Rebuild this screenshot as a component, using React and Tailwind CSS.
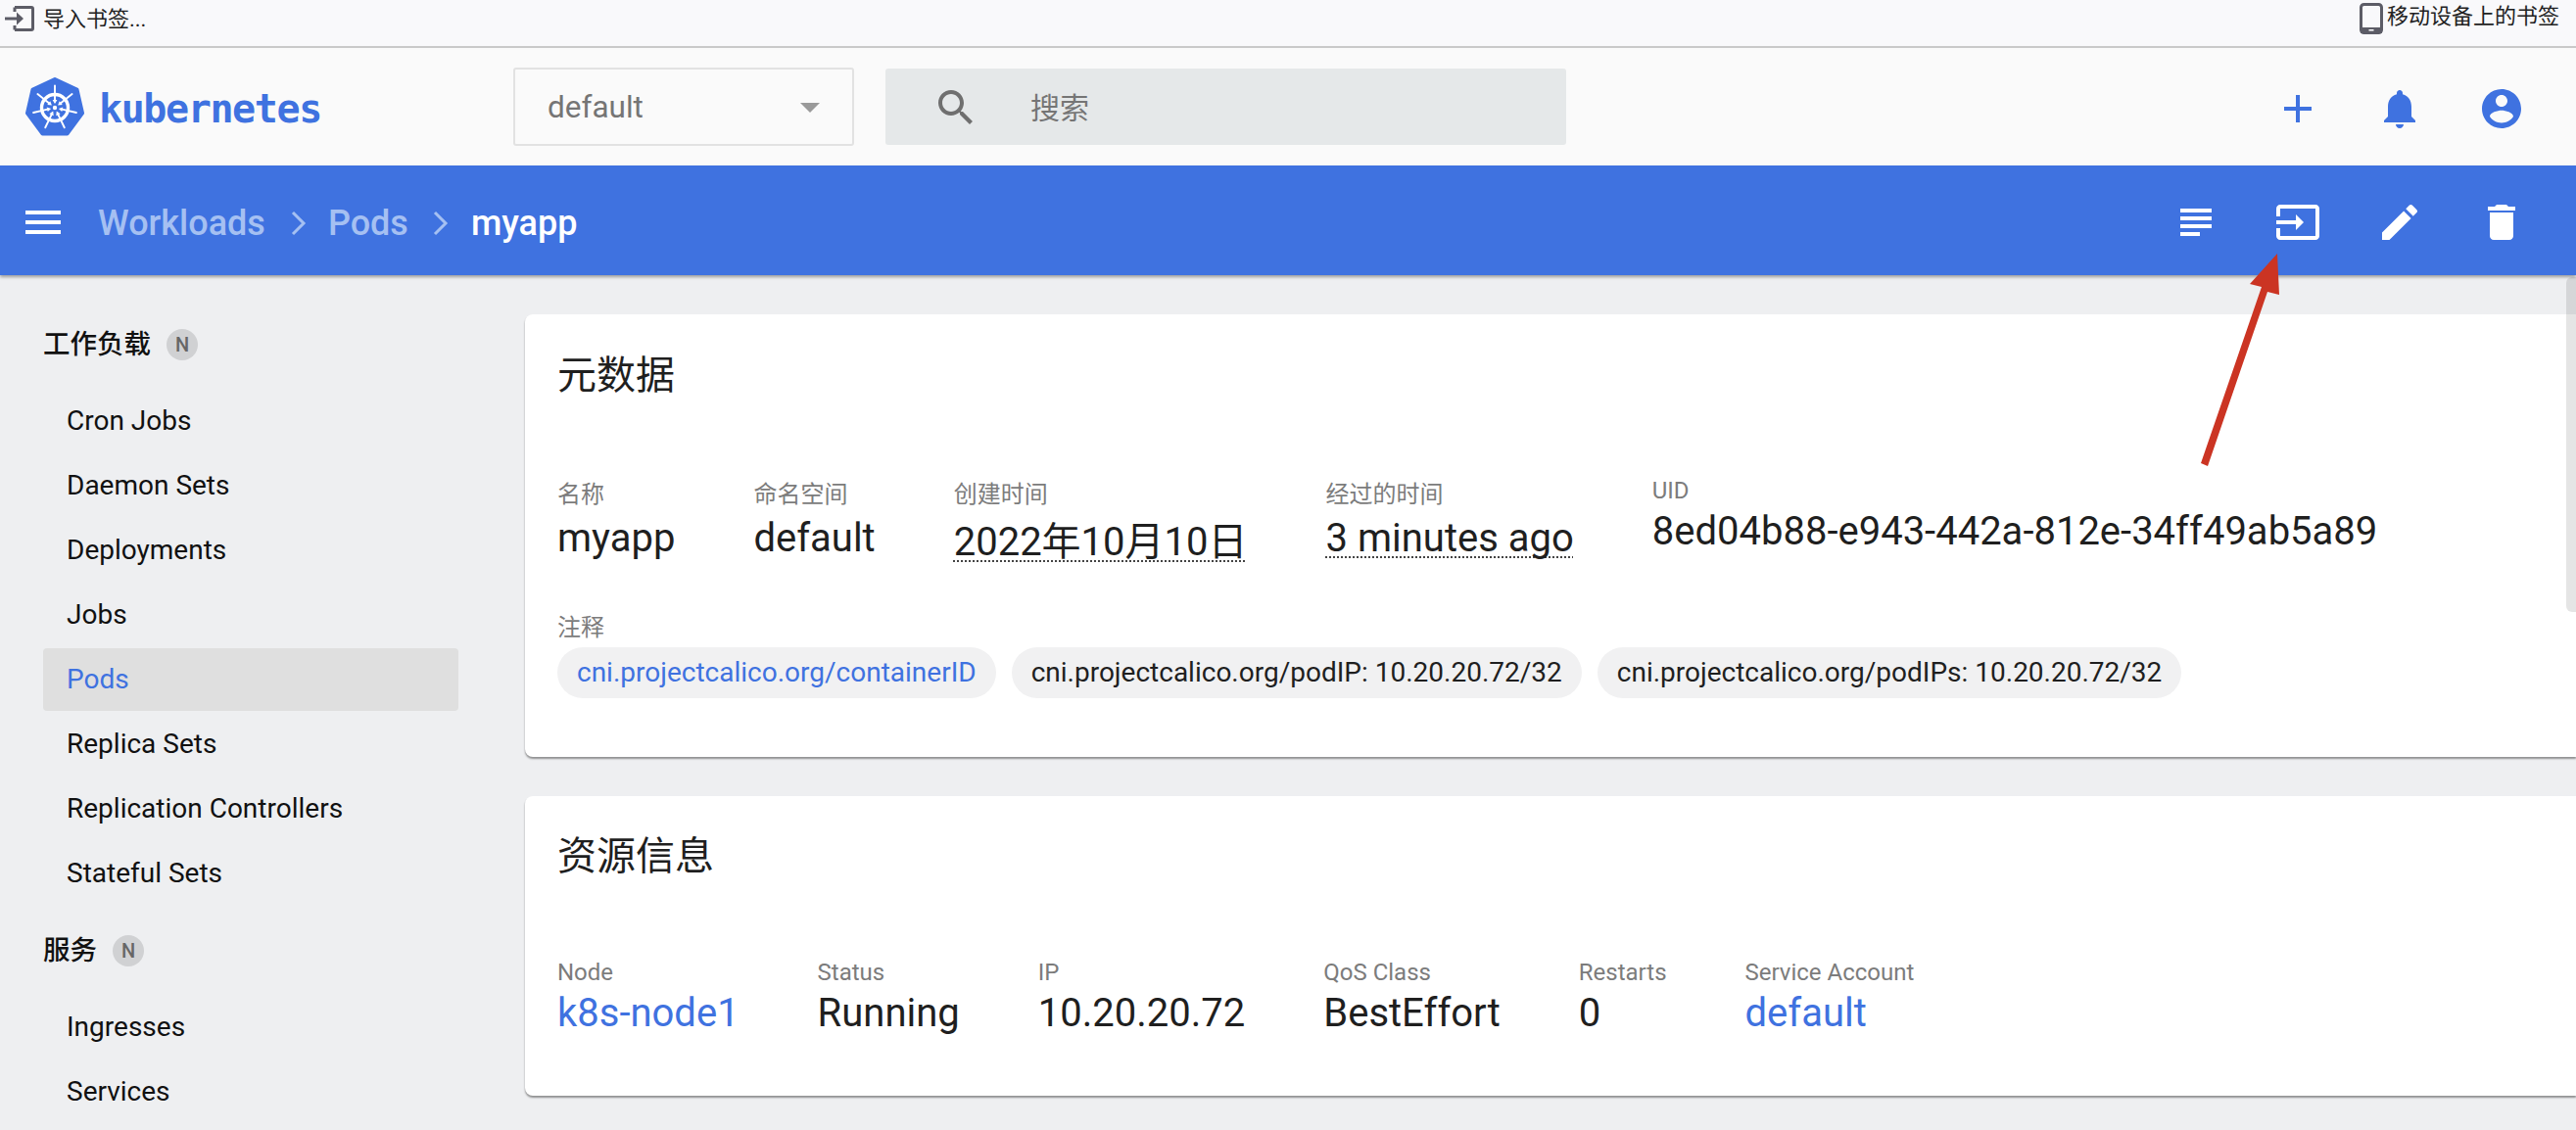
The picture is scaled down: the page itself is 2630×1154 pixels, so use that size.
const spokes = [0, 51.43, 102.86, 154.29, 205.71, 257.14, 308.57];

const sideGroups = [
  {
    title: "工作负载",
    items: ["Cron Jobs", "Daemon Sets", "Deployments", "Jobs", "Pods", "Replica Sets", "Replication Controllers", "Stateful Sets"],
  },
  { title: "服务", items: ["Ingresses", "Services"] },
];

function MaterialIcon({ d, className }) {
  return (
    <svg viewBox="0 0 24 24" className={className} fill="currentColor">
      <path d={d} />
    </svg>
  );
}

const icons = {
  add: "M19 13h-6v6h-2v-6H5v-2h6V5h2v6h6v2z",
  bell: "M12 22c1.1 0 2-.9 2-2h-4c0 1.1.89 2 2 2zm6-6v-5c0-3.07-1.64-5.64-4.5-6.32V4c0-.83-.67-1.5-1.5-1.5s-1.5.67-1.5 1.5v.68C7.63 5.36 6 7.92 6 11v5l-2 2v1h16v-1l-2-2z",
  account: "M12 2C6.48 2 2 6.48 2 12s4.48 10 10 10 10-4.48 10-10S17.52 2 12 2zm0 3c1.66 0 3 1.34 3 3s-1.34 3-3 3-3-1.34-3-3 1.34-3 3-3zm0 14.2c-2.5 0-4.71-1.28-6-3.22.03-1.99 4-3.08 6-3.08 1.99 0 5.97 1.09 6 3.08-1.29 1.94-3.5 3.22-6 3.22z",
  menu: "M3 18h18v-2H3v2zm0-5h18v-2H3v2zm0-7v2h18V6H3z",
  search: "M15.5 14h-.79l-.28-.27C15.41 12.59 16 11.11 16 9.5 16 5.91 13.09 3 9.5 3S3 5.91 3 9.5 5.91 16 9.5 16c1.61 0 3.09-.59 4.23-1.57l.27.28v.79l5 4.99L20.49 19l-4.99-5zm-6 0C7.01 14 5 11.99 5 9.5S7.01 5 9.5 5 14 7.01 14 9.5 11.99 14 9.5 14z",
  subject: "M14 17H4v2h10v-2zm6-8H4v2h16V9zM4 15h16v-2H4v2zM4 5v2h16V5H4z",
  input: "M21 3.01H3c-1.1 0-2 .9-2 2V9h2V4.99h18v14.03H3V15H1v4.01c0 1.1.9 1.98 2 1.98h18c1.1 0 2-.88 2-1.98v-14c0-1.11-.9-2-2-2zM11 16l4-4-4-4v3H1v2h10v3z",
  edit: "M3 17.25V21h3.75L17.81 9.94l-3.75-3.75L3 17.25zM20.71 7.04c.39-.39.39-1.02 0-1.41l-2.34-2.34c-.39-.39-1.02-.39-1.41 0l-1.83 1.83 3.75 3.75 1.83-1.83z",
  trash: "M6 19c0 1.1.9 2 2 2h8c1.1 0 2-.9 2-2V7H6v12zM19 4h-3.5l-1-1h-5l-1 1H5v2h14V4z",
};

function KubeLogo() {
  return (
    <svg viewBox="0 0 60 60" className="w-[60px] h-[60px] shrink-0">
      <path
        d="M30 2 L52.5 12.5 L58 36.5 L42.5 57.5 L17.5 57.5 L2 36.5 L7.5 12.5 Z"
        fill="#3f72e0"
        stroke="#3f72e0"
        strokeWidth="4"
        strokeLinejoin="round"
      />
      <circle cx="30" cy="31" r="13.5" fill="none" stroke="#fff" strokeWidth="3.4" />
      <circle cx="30" cy="31" r="2.2" fill="#fff" />
      {spokes.map((a) => (
        <g key={a} transform={`rotate(${a} 30 31)`}>
          <path d="M30 24.5 L30 8.5" stroke="#fff" strokeWidth="1.9" strokeLinecap="round" />
          <path d="M27.6 23 L32.4 23 L30 27 Z" fill="#fff" />
        </g>
      ))}
    </svg>
  );
}

function Chevron() {
  return (
    <svg viewBox="0 0 16 26" className="w-[16px] h-[26px] shrink-0" fill="none" stroke="#a5c0f2" strokeWidth="3">
      <path d="M2 2 L13 13 L2 24" />
    </svg>
  );
}

function Badge() {
  return (
    <span className="ml-[16px] w-[32px] h-[32px] rounded-full bg-[#d0d1d3] text-[#666] text-[20px] font-medium flex items-center justify-center">
      N
    </span>
  );
}

function Sidebar() {
  return (
    <nav className="w-[536px] shrink-0 pt-[51px] pl-[44px] pr-[68px]">
      {sideGroups.map((group) => (
        <div key={group.title} className="mb-[27px]">
          <div className="h-[40px] flex items-center mb-[26px] text-[27.5px] font-medium text-[#111] leading-none">
            <span>{group.title}</span>
            <Badge />
          </div>
          {group.items.map((item) => (
            <div
              key={item}
              className={
                "h-[64px] mb-[2px] pl-[24px] flex items-center rounded-[4px] text-[28px] " +
                (item === "Pods" ? "bg-[#dfdfdf] text-[#3f72e0]" : "text-[#111]")
              }
            >
              {item}
            </div>
          ))}
        </div>
      ))}
    </nav>
  );
}

function Field({ label, value, link, dotted, valueClass = "mt-[3px]", labelClass = "" }) {
  return (
    <div className="shrink-0">
      <div className={"h-[36px] leading-[36px] text-[24px] text-[#7c7c7c] " + labelClass}>{label}</div>
      <div
        className={
          "h-[48px] leading-[48px] text-[40px] whitespace-nowrap " +
          (link ? "text-[#3f72e0] " : "text-[#1f1f1f] ") +
          valueClass
        }
      >
        <span
          className={
            dotted
              ? "underline decoration-dotted decoration-2 decoration-[#444] underline-offset-[5px] [text-decoration-skip-ink:none]"
              : ""
          }
        >
          {value}
        </span>
      </div>
    </div>
  );
}

function Chip({ children, link }) {
  return (
    <span
      className={
        "h-[52px] px-[20px] rounded-full bg-[#f1f1f2] text-[28px] leading-[52px] whitespace-nowrap " +
        (link ? "text-[#3f72e0]" : "text-[#1f1f1f]")
      }
    >
      {children}
    </span>
  );
}

export default function App() {
  return (
    <div className="relative w-full h-screen overflow-hidden flex flex-col bg-[#eeeff1] font-[Roboto,'Noto_Sans_CJK_SC',sans-serif]">
      {/* bookmark bar */}
      <div className="h-[49px] shrink-0 bg-[#f9f9fb] border-b-2 border-[#c9c9c9] flex justify-between pl-[5px] pr-[17px] text-[22px] text-[#222]">
        <div className="flex items-start">
          <svg viewBox="0 0 30 26" className="w-[30px] h-[26px] mt-[6px]" fill="none" stroke="#5c5c66" strokeWidth="3">
            <path d="M10 1.5 H27 a1.5 1.5 0 0 1 1.5 1.5 V23 a1.5 1.5 0 0 1 -1.5 1.5 H10 M10 1.5 V6 M10 24.5 V20" />
            <path d="M0 13 H16" />
            <path d="M12 6.5 L19 13 L12 19.5 Z" fill="#5c5c66" stroke="none" />
          </svg>
          <span className="ml-[9px] mt-[4px] leading-[32px]">导入书签...</span>
        </div>
        <div className="flex items-start">
          <svg viewBox="0 0 24 32" className="w-[24px] h-[32px] mt-[3px]" fill="none">
            <rect x="1.5" y="1.5" width="21" height="29" rx="3" stroke="#5c5c66" strokeWidth="3" />
            <rect x="1" y="25" width="22" height="6" fill="#5c5c66" />
            <rect x="9.5" y="27" width="5" height="1.6" fill="#f9f9fb" />
          </svg>
          <span className="ml-[4px] mt-[1px] leading-[32px]">移动设备上的书签</span>
        </div>
      </div>

      {/* top bar */}
      <div className="h-[120px] shrink-0 bg-[#fafafa] flex items-center pl-[26px]">
        <KubeLogo />
        <span className="ml-[15px] w-[423px] pt-[3px] text-[#3f72e0] text-[40px] tracking-[-1.4px] font-bold font-['DejaVu_Sans_Mono',monospace] leading-none">
          kubernetes
        </span>
        <div className="w-[348px] h-[80px] border-2 border-[#e2e2e2] rounded-[3px] flex items-center justify-between pl-[33px] pr-[33px] pt-[2px] text-[31.5px] text-[#757575]">
          <span>default</span>
          <span className="w-0 h-0 border-x-[10px] border-t-[10px] border-x-transparent border-t-[#9a9a9a]" />
        </div>
        <div className="ml-[32px] w-[695px] h-[78px] bg-[#e5e8e9] rounded-[3px] flex items-center pl-[48px] pt-[2px] text-[30px] text-[#757575]">
          <MaterialIcon d={icons.search} className="w-[48px] h-[48px] text-[#6f6f6f]" />
          <span className="ml-[52px]">搜索</span>
        </div>
        <div className="ml-auto pr-[52px] pt-[4px] flex items-center gap-[56px] text-[#3f72e0]">
          <MaterialIcon d={icons.add} className="w-[48px] h-[48px]" />
          <MaterialIcon d={icons.bell} className="w-[48px] h-[48px]" />
          <MaterialIcon d={icons.account} className="w-[48px] h-[48px]" />
        </div>
      </div>

      {/* blue bar */}
      <div className="relative z-10 h-[112px] shrink-0 bg-[#3f72e0] shadow-[0_2px_3px_rgba(0,0,0,0.35)] flex items-center pl-[20px] pt-[4px] text-white">
        <MaterialIcon d={icons.menu} className="w-[48px] h-[48px]" />
        <div className="ml-[32px] pt-[2px] flex items-center text-[36px] font-medium text-[#a5c0f2]">
          <span>Workloads</span>
          <span className="ml-[26px] mr-[22px]"><Chevron /></span>
          <span>Pods</span>
          <span className="ml-[25px] mr-[23px]"><Chevron /></span>
          <span className="text-white">myapp</span>
        </div>
        <div className="ml-auto pr-[52px] flex items-center gap-[56px]">
          <MaterialIcon d={icons.subject} className="w-[48px] h-[48px]" />
          <MaterialIcon d={icons.input} className="w-[48px] h-[48px]" />
          <MaterialIcon d={icons.edit} className="w-[48px] h-[48px]" />
          <MaterialIcon d={icons.trash} className="w-[48px] h-[48px]" />
        </div>
      </div>

      {/* body */}
      <div className="flex flex-1 min-h-0">
        <Sidebar />
        <main className="flex-1 min-w-0 pt-[40px]">
          <section className="bg-white rounded-l-[8px] shadow-[0_2px_2px_rgba(0,0,0,0.4)] pl-[33px] pb-[60px]">
            <h2 className="h-[166px] pt-[43px] text-[40px] leading-[40px] font-normal text-[#1f1f1f]">元数据</h2>
            <div className="flex gap-[80px]">
              <Field label="名称" value="myapp" />
              <Field label="命名空间" value="default" />
              <Field label="创建时间" value="2022年10月10日" dotted valueClass="mt-[3px] pt-[4px]" />
              <Field label="经过的时间" value="3 minutes ago" dotted />
              <Field label="UID" value="8ed04b88-e943-442a-812e-34ff49ab5a89" labelClass="-mt-[4px]" valueClass="mt-0" />
            </div>
            <div className="mt-[49px] h-[36px] leading-[36px] text-[24px] text-[#7c7c7c]">注释</div>
            <div className="mt-[2px] flex gap-[16px]">
              <Chip link>cni.projectcalico.org/containerID</Chip>
              <Chip>cni.projectcalico.org/podIP: 10.20.20.72/32</Chip>
              <Chip>cni.projectcalico.org/podIPs: 10.20.20.72/32</Chip>
            </div>
          </section>

          <section className="mt-[40px] bg-white rounded-l-[8px] shadow-[0_2px_2px_rgba(0,0,0,0.4)] pl-[33px] pb-[60px]">
            <h2 className="h-[162px] pt-[42px] text-[40px] leading-[40px] font-normal text-[#1f1f1f]">资源信息</h2>
            <div className="flex gap-[80px]">
              <Field label="Node" value="k8s-node1" link valueClass="mt-0" />
              <Field label="Status" value="Running" valueClass="mt-0" />
              <Field label="IP" value="10.20.20.72" valueClass="mt-0" />
              <Field label="QoS Class" value="BestEffort" valueClass="mt-0" />
              <Field label="Restarts" value="0" valueClass="mt-0" />
              <Field label="Service Account" value="default" link valueClass="mt-0" />
            </div>
          </section>
        </main>
      </div>

      {/* scrollbar thumb */}
      <div className="absolute z-20 right-0 top-[283px] w-[10px] h-[342px] rounded-l-[6px] bg-black/10" />

      {/* red annotation arrow */}
      <svg className="absolute z-30 left-0 top-0 pointer-events-none" width="2630" height="500" viewBox="0 0 2630 500">
        <path
          d="M2325 259 L2297 290 L2309 293 L2247 473 L2254 476 L2315 298 L2327 301 Z"
          fill="#cb3423"
        />
      </svg>
    </div>
  );
}
